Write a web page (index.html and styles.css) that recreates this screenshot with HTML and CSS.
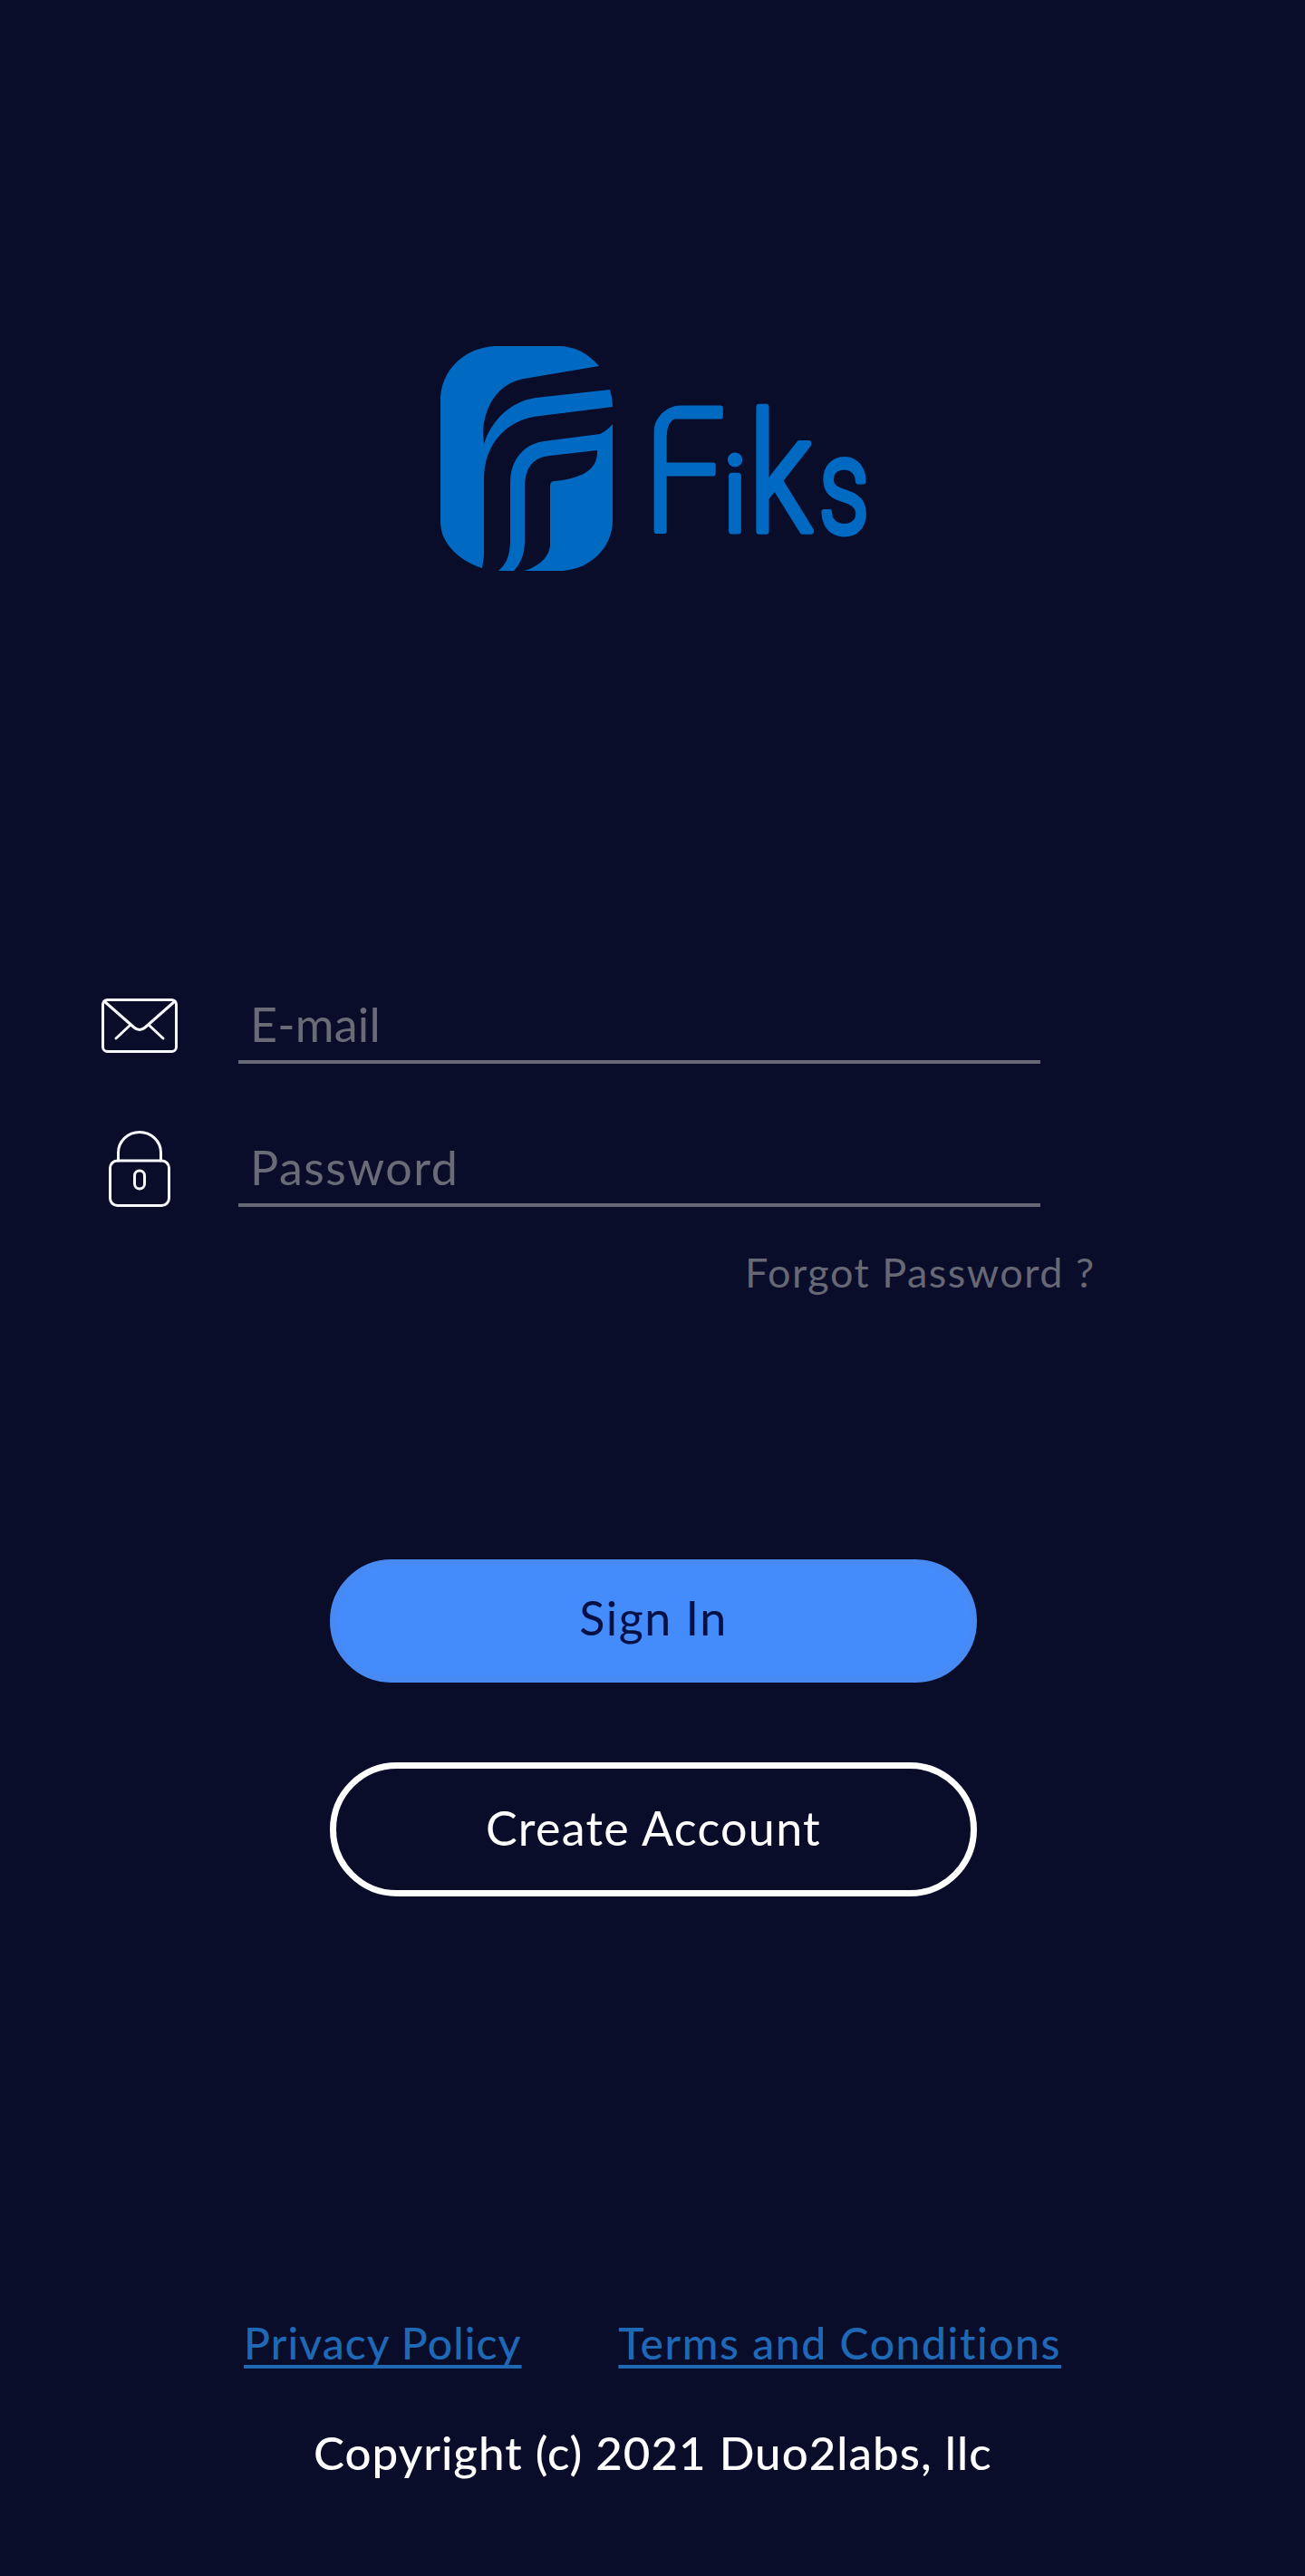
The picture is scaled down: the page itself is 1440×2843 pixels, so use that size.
FILE: index.html
```html
<!DOCTYPE html>
<html lang="en">
<head>
<meta charset="utf-8">
<title>Fiks – Sign In</title>
<link rel="stylesheet" href="styles.css">
</head>
<body>
<main class="screen">
  <header class="brand">
    <svg class="brand-mark" viewBox="0 0 190 248" aria-hidden="true">
      <path d="M60 0H130Q156 0 175 22L92 36C64 41 48 66 47 96L48 108C58 78 80 61 105 57L187 48Q190 57 190 67L110 77C74 80 48 108 48 146V232L46 245C18 236 0 216 0 194V56C2 26 26 2 60 0Z"/>
      <path d="M190 86V192C190 222 166 246 134 248H92C108 244 121 232 121 219V154Q121 149 126 149C154 146 174 138 173 115L120 121C100 123 93 137 93 156V214C93 228 90 238 81 248H64C74 240 77 228 77 214V150C77 126 92 108 114 105L176 97Q183 94 190 86Z"/>
    </svg>
    <svg class="brand-name" viewBox="0 0 250 160" role="img" aria-label="Fiks">
      <clipPath id="round-corner"><rect x="5" y="3" width="140" height="190" rx="32"/></clipPath>
      <g clip-path="url(#round-corner)">
        <text class="glyph-f" transform="translate(-7 143) scale(.85 1)">F</text>
        <path d="M17 36V15H38C25 17 20 24 20 36Z"/>
      </g>
      <text class="glyph-i" transform="translate(82 142)">i</text>
      <text class="glyph-k" transform="translate(110.500 142) scale(.78 1)">k</text>
      <text class="glyph-s" transform="translate(187.500 144) scale(.74 1)">s</text>
    </svg>
  </header>
  <form class="login">
    <label class="field">
      <svg class="icon icon-mail" viewBox="0 0 84 60" aria-hidden="true"><rect x="1.5" y="1.5" width="81" height="57" rx="5"/><path d="M3 3L36 32Q42 37 48 32L81 3M32 29L16 44M52 29L68 44"/></svg>
      <span class="input email">E-mail</span>
    </label>
    <label class="field">
      <svg class="icon icon-lock" viewBox="0 0 68 84" aria-hidden="true"><rect x="1.5" y="33" width="65" height="49.500" rx="8"/><path d="M10.500 33V24a23.500 22.500 0 0 1 47 0V33"/><rect x="28.500" y="44" width="11" height="20" rx="5.500"/></svg>
      <span class="input password">Password</span>
    </label>
    <a class="forgot">Forgot Password ?</a>
    <button type="button" class="button primary">Sign In</button>
    <button type="button" class="button secondary">Create Account</button>
  </form>
  <footer class="legal">
    <nav class="links"><a class="privacy">Privacy Policy</a><a class="terms">Terms and Conditions</a></nav>
    <p class="copyright">Copyright (c) 2021 Duo2labs, llc</p>
  </footer>
</main>
</body>
</html>
```
FILE: styles.css
```css
* { box-sizing: border-box; }
body { margin: 0; background: #090d29; }
.screen {
  display: flex;
  flex-direction: column;
  width: 1440px;
  height: 2843px;
  font-family: Lato, "Open Sans", sans-serif;
  font-size: 50px;
  line-height: 60px;
  color: #fff;
}
.brand {
  display: flex;
  padding: 382px 0 0 486px;
  fill: #0069c2;
}
.brand-mark { width: 190px; height: 248px; }
.brand-name { width: 250px; height: 160px; margin: 62px 0 0 40px; overflow: visible; }
.brand-name text {
  font-family: Roboto, sans-serif;
  font-weight: 300;
  stroke: #0069c2;
  stroke-linejoin: round;
}
.glyph-f { font-size: 192px; stroke-width: 5px; }
.glyph-i { font-size: 115px; stroke-width: 7px; }
.glyph-k { font-size: 181px; stroke-width: 7.5px; }
.glyph-s { font-size: 149px; stroke-width: 7px; }
.login { display: flex; flex-direction: column; padding-top: 454px; }
.field {
  display: flex;
  align-items: center;
  height: 90px;
  margin: 0 0 68px 112px;
}
.icon { flex: none; margin-top: 5px; fill: none; stroke: #f8f9ff; stroke-width: 3; stroke-linecap: round; stroke-linejoin: round; }
.icon-mail { width: 84px; height: 60px; margin-right: 67px; }
.icon-lock { width: 68px; height: 84px; margin-right: 75px; margin-left: 8px; }
.input {
  width: 885px;
  height: 90px;
  padding: 16px 0 0 13px;
  border-bottom: 4px solid #666876;
  color: #696b77;
}
.email { font-size: 52px; letter-spacing: .2px; }
.password { font-size: 52px; letter-spacing: 1.5px; }
.forgot { margin: -26px 0 0 822px; font-size: 45px; letter-spacing: 1.5px; color: #666876; }
.button {
  width: 714px;
  margin-left: 364px;
  border: 7px solid;
  font: inherit;
  font-size: 52px;
}
.primary { height: 136px; margin-top: 287px; padding: 0 0 9px; border-color: #488af3; border-radius: 68px; background: #448bfc; color: #051044; letter-spacing: 1.5px; }
.secondary { height: 148px; margin-top: 88px; padding: 0 0 4px; border-color: #fff; border-radius: 74px; background: none; color: #fff; letter-spacing: 1.3px; }
.links {
  display: flex;
  justify-content: space-between;
  width: 902px;
  margin: 463px 0 0 269px;
  font-size: 48px;
  font-weight: 500;
  color: #1f68b5;
}
.links a { text-decoration: underline; text-decoration-skip-ink: none; text-decoration-thickness: 4px; text-underline-offset: 6px; }
.privacy { letter-spacing: 1.1px; }
.terms { letter-spacing: 1.6px; }
.copyright { margin: 61px 0 0 346px; font-size: 51px; font-weight: 500; letter-spacing: 1.05px; }
```
